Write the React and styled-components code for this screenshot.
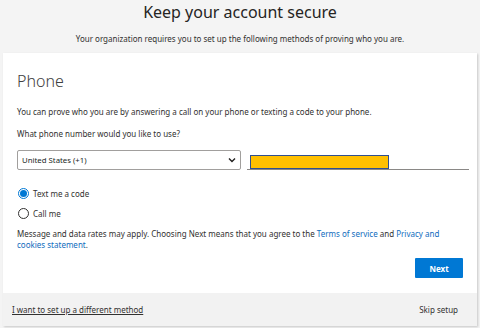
import React from "react";
import styled, { createGlobalStyle } from "styled-components";

const Global = createGlobalStyle`
  html, body { margin: 0; padding: 0; }
  body {
    background: #f4f4f4;
    font-family: "Noto Sans", "Open Sans", Arial, sans-serif;
    color: #323130;
  }
`;

const Page = styled.div`
  width: 480px;
  height: 328px;
  overflow: hidden;
  display: flex;
  flex-direction: column;
`;

const Header = styled.header`
  display: flex;
  flex-direction: column;
  align-items: center;
  padding-top: 1px;
  height: 53px;
  box-sizing: border-box;
`;

const Title = styled.h1`
  margin: 0;
  font-size: 16px;
  font-weight: 400;
  line-height: 22px;
  color: #252423;
`;

const Subtitle = styled.p`
  margin: 10px 0 0;
  font-size: 8px;
  line-height: 12px;
  color: #323130;
`;

const Card = styled.section`
  margin: 0 3px;
  background: #fff;
  box-shadow: 1px 1px 2px rgba(0, 0, 0, 0.18);
  display: flex;
  flex-direction: column;
`;

const Body = styled.div`
  padding: 17px 8px 15px 14px;
  display: flex;
  flex-direction: column;
`;

const Heading = styled.h2`
  margin: 0;
  font-size: 16px;
  font-weight: 300;
  line-height: 22px;
  color: #404040;
`;

const Text = styled.p`
  margin: ${(p) => p.$mt || 0}px 0 0;
  font-size: 8px;
  line-height: 11px;
  color: #323130;
`;

const Link = styled.a`
  color: #0f6cbd;
  text-decoration: none;
`;

const PhoneRow = styled.div`
  display: flex;
  align-items: flex-end;
  gap: 6px;
  margin-top: 11px;
`;

const Select = styled.div`
  flex: 0 0 224px;
  height: 20px;
  box-sizing: border-box;
  border: 1px solid #a19f9d;
  border-radius: 2px;
  display: flex;
  align-items: center;
  justify-content: space-between;
  padding: 0 4px 0 4px;
  font-size: 7.8px;
  color: #201f1e;
`;

const InputLine = styled.div`
  flex: 0 0 222px;
  height: 19px;
  border-bottom: 1px solid #8a8886;
  display: flex;
  align-items: flex-start;
  padding-left: 3px;
  box-sizing: border-box;
`;

const Redacted = styled.div`
  width: 139px;
  height: 14px;
  margin-top: 4px;
  box-sizing: border-box;
  background: #ffc000;
  border: 1px solid #2f4f8f;
`;

const RadioGroup = styled.div`
  display: flex;
  flex-direction: column;
  gap: 7px;
  margin-top: 17px;
`;

const RadioRow = styled.label`
  display: flex;
  align-items: center;
  gap: 4px;
  font-size: 8px;
  color: #323130;
  height: 13px;
`;

const RadioCircle = styled.span`
  width: 11px;
  height: 11px;
  border-radius: 50%;
  border: 1px solid ${(p) => (p.$checked ? "#0078d4" : "#323130")};
  display: flex;
  align-items: center;
  justify-content: center;
  box-sizing: border-box;
  margin-left: 1px;
  &::after {
    content: "";
    width: 7px;
    height: 7px;
    border-radius: 50%;
    background: ${(p) => (p.$checked ? "#0078d4" : "transparent")};
  }
`;

const Actions = styled.div`
  display: flex;
  justify-content: flex-end;
  margin-top: 8px;
  padding-right: 6px;
`;

const PrimaryButton = styled.button`
  width: 48px;
  height: 20px;
  border: none;
  border-radius: 1px;
  background: #0078d4;
  color: #fff;
  font-family: inherit;
  font-weight: 700;
  font-size: 8px;
  padding: 0;
`;

const Footer = styled.footer`
  background: #f2f2f2;
  height: 33px;
  display: flex;
  align-items: center;
  justify-content: space-between;
  padding: 0 19px 0 9px;
  font-size: 8px;
  color: #323130;
`;

const FooterLink = styled.a`
  color: #323130;
  text-decoration: underline;
`;

const Chevron = () => (
  <svg width="8" height="6" viewBox="0 0 8 6">
    <path d="M1 1.5 L4 4.5 L7 1.5" fill="none" stroke="#201f1e" strokeWidth="1.4" />
  </svg>
);

export default function App() {
  return (
    <>
      <Global />
      <Page>
        <Header>
          <Title>Keep your account secure</Title>
          <Subtitle>
            Your organization requires you to set up the following methods of proving who you are.
          </Subtitle>
        </Header>
        <Card>
          <Body>
            <Heading>Phone</Heading>
            <Text $mt={14}>
              You can prove who you are by answering a call on your phone or texting a code to your phone.
            </Text>
            <Text $mt={11}>What phone number would you like to use?</Text>
            <PhoneRow>
              <Select>
                <span>United States (+1)</span>
                <Chevron />
              </Select>
              <InputLine>
                <Redacted />
              </InputLine>
            </PhoneRow>
            <RadioGroup>
              <RadioRow>
                <RadioCircle $checked />
                Text me a code
              </RadioRow>
              <RadioRow>
                <RadioCircle />
                Call me
              </RadioRow>
            </RadioGroup>
            <Text $mt={8}>
              Message and data rates may apply. Choosing Next means that you agree to the{" "}
              <Link>Terms of service</Link> and <Link>Privacy and cookies statement</Link>.
            </Text>
            <Actions>
              <PrimaryButton>Next</PrimaryButton>
            </Actions>
          </Body>
          <Footer>
            <FooterLink>I want to set up a different method</FooterLink>
            <span>Skip setup</span>
          </Footer>
        </Card>
      </Page>
    </>
  );
}
